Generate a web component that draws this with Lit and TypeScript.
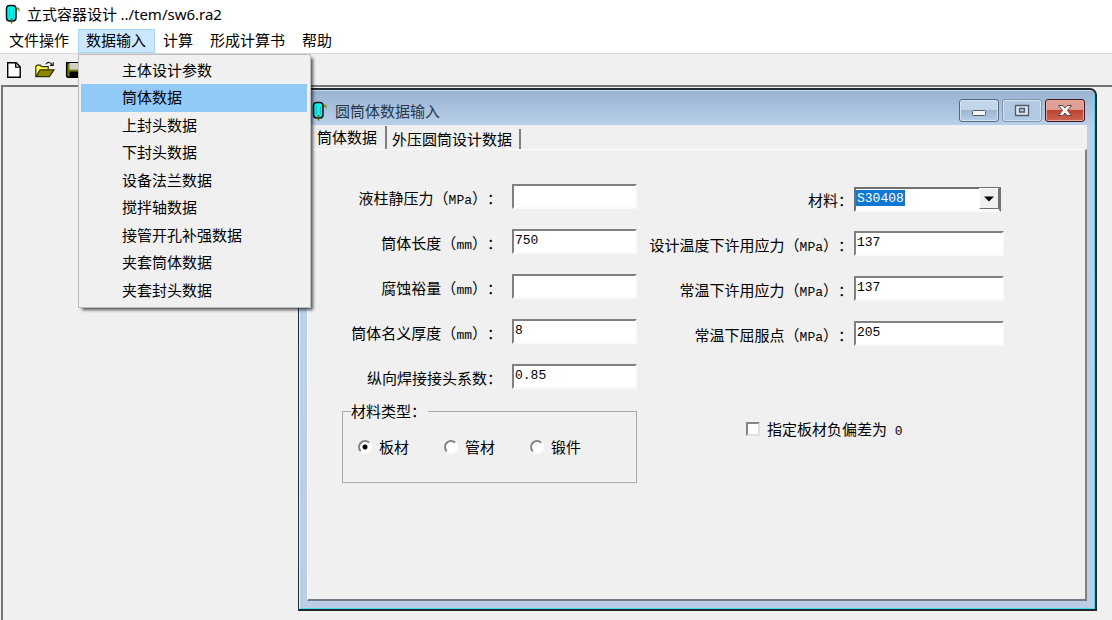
import { LitElement, html, css, svg } from "lit";
import { customElement, property, state } from "lit/decorators.js";

const vesselIcon = html`<svg width="16" height="20" viewBox="0 0 16 20" aria-hidden="true">
  <path d="M11.500 5.500h1.500l1-1.500 1 1v2.500" fill="none" stroke="#8a8a00" stroke-width="1.2" />
  <rect x="2.500" y="1.500" width="9.500" height="15.500" rx="3.200" fill="#00f4f0" stroke="#111" stroke-width="1.500" />
  <path d="M5.500 5.500v8M9.500 5.500v8" stroke="#28b9b4" stroke-width="1" />
  <path d="M7.500 14v5.500" stroke="#55550a" stroke-width="1.400" />
</svg>`;

const toolIcons = [
  {
    label: "新建",
    art: svg`<path d="M2.700 2.700h8.500l4 4v10.600H2.700z" fill="#fff" stroke="#000" stroke-width="1.400"/><path d="M10.700 3v4.200h4.300" fill="none" stroke="#000" stroke-width="1.300"/>`,
  },
  {
    label: "打开",
    art: svg`<path d="M.8 16.5V6.6l1.500-1.500h3l1.400 1.600h6.500v3" fill="#ffff55" stroke="#333300" stroke-width="1.200"/><path d="M1 16.700 5 9.800h14l-4.600 6.900z" fill="#8b8700" stroke="#333300" stroke-width="1.300"/><path d="M11 4.200c1.500-2.400 4.500-2.400 6 .6m1.200-2.600v3.200h-3.300" fill="none" stroke="#111" stroke-width="1.200"/>`,
  },
  {
    label: "保存",
    art: svg`<path d="M1.700 2.700h15v14.600h-14l-1-1z" fill="#7e7e00" stroke="#000" stroke-width="1.500"/><path d="M4.500 3h9.500v6.500H4.500z" fill="#d0d0c8"/><path d="M4.500 11.500H14V17H4.500z" fill="#000"/>`,
  },
];

interface Field {
  id: string;
  text: string;
  unit?: string;
  value: string;
}

const leftFields: Field[] = [
  { id: "pressure", text: "液柱静压力", unit: "MPa", value: "" },
  { id: "length", text: "筒体长度", unit: "mm", value: "750" },
  { id: "corrosion", text: "腐蚀裕量", unit: "mm", value: "" },
  { id: "thickness", text: "筒体名义厚度", unit: "mm", value: "8" },
  { id: "joint", text: "纵向焊接接头系数", value: "0.85" },
];

const rightFields: Field[] = [
  { id: "stress-design", text: "设计温度下许用应力", unit: "MPa", value: "137" },
  { id: "stress-normal", text: "常温下许用应力", unit: "MPa", value: "137" },
  { id: "yield", text: "常温下屈服点", unit: "MPa", value: "205" },
];

const labelText = (f: { text: string; unit?: string }) =>
  f.unit ? html`${f.text}（<span class="latin">${f.unit}</span>）：` : html`${f.text}：`;

@customElement("shell-data-form")
export class ShellDataForm extends LitElement {
  @state() private kind = "板材";

  static styles = css`
    :host {
      display: block;
      padding: 34px 81px 20px 34px;
      font: 15px/20px "Noto Sans CJK SC", sans-serif;
      text-spacing-trim: space-all;
      color: #000;
    }
    * { box-sizing: border-box; }
    .columns {
      display: grid;
      grid-template-columns: 295fr 357fr;
      column-gap: 10px;
    }
    .fields { display: grid; grid-auto-rows: 25px; row-gap: 20px; }
    .left .fields { grid-template-columns: 160px minmax(0, 1fr); column-gap: 10px; }
    .right .fields { grid-template-columns: 206px minmax(0, 1fr); column-gap: 1px; padding-top: 2px; }
    .name { padding-top: 4px; text-align: right; white-space: nowrap; }
    .latin { font: 13px/1 "Liberation Mono", monospace; }
    .box {
      width: 100%;
      height: 25px;
      margin: 0;
      padding: 0 1px 3px;
      border: 2px solid;
      border-color: #808080 #fafafa #fafafa #808080;
      border-radius: 0;
      outline: 0;
      background: #fff;
      color: #000;
      font: 13px/20px "Liberation Mono", monospace;
    }
    .combo { position: relative; margin-right: 3px; }
    .pick {
      appearance: none;
      color: #fff;
      border-color: #707070;
      border-bottom-color: #fafafa;
      background: linear-gradient(#0f78d4, #0f78d4) 0 1px / 49px 16px no-repeat #fff;
    }
    .pick option { color: #000; background: #fff; }
    .arrow {
      position: absolute;
      top: 2px;
      right: 2px;
      width: 20px;
      height: 21px;
      display: grid;
      place-items: center;
      pointer-events: none;
      background: #f0f0f0;
      border: 1px solid;
      border-color: #fff #707070 #707070 #fff;
    }
    .group {
      min-width: 0;
      margin: 12px 0 0;
      padding: 16px 15px 25px;
      border: 1px solid #a9a9a9;
      box-shadow: inset 0 -1px #f8f8f8;
    }
    .legend { margin-left: -7px; padding: 0 2px 0 0; line-height: 20px; }
    .choices { display: flex; gap: 35px; }
    .choice { display: flex; align-items: center; gap: 7px; white-space: nowrap; }
    .radio {
      appearance: none;
      width: 14px;
      height: 14px;
      margin: 0;
      border: 2px solid;
      border-color: #858585 #fff #fff #858585;
      border-radius: 50%;
      background: #fff;
    }
    .radio:checked { background: radial-gradient(circle, #000 2px, #fff 3px); }
    .deviation { margin: 73px 0 0 99px; }
    .tick {
      appearance: none;
      width: 14px;
      height: 14px;
      margin: 0;
      border: 2px solid;
      border-color: #858585 #e0e0e0 #e0e0e0 #858585;
      background: #fff;
    }
    .tick:checked { background: linear-gradient(#000, #000) center / 6px 6px no-repeat #fff; }
  `;

  private row(f: Field) {
    return html`<label class="name" for=${f.id}>${labelText(f)}</label>
      <input class="box" id=${f.id} type="text" .value=${f.value} />`;
  }

  render() {
    return html`<form class="columns">
      <div class="left">
        <div class="fields">${leftFields.map((f) => this.row(f))}</div>
        <fieldset class="group">
          <legend class="legend">材料类型：</legend>
          <div class="choices">
            ${["板材", "管材", "锻件"].map(
              (k) => html`<label class="choice"
                ><input class="radio" type="radio" name="kind" .checked=${this.kind === k}
                  @change=${() => (this.kind = k)} />${k}</label>`
            )}
          </div>
        </fieldset>
      </div>
      <div class="right">
        <div class="fields">
          <label class="name" for="material">材料：</label>
          <div class="combo">
            <select class="box pick" id="material"><option>S30408</option></select>
            <span class="arrow"><svg width="10" height="6" viewBox="0 0 10 6"><path d="M0 .5h10L5 5.500z" /></svg></span>
          </div>
          ${rightFields.map((f) => this.row(f))}
        </div>
        <label class="choice deviation"
          ><input class="tick" type="checkbox" /><span>指定板材负偏差为<span class="latin"> 0</span></span></label>
      </div>
    </form>`;
  }
}

@customElement("child-window")
export class ChildWindow extends LitElement {
  @property() caption = "";

  static styles = css`
    :host {
      display: flex;
      flex-direction: column;
      box-sizing: border-box;
      padding: 0 8px 8px 7px;
      border: 2px solid #20292f;
      border-left-width: 1px;
      border-bottom-width: 2px;
      border-radius: 6px 7px 0 0;
      background: linear-gradient(#98b2d0, #bad1ec 37px, #bad1ec 140px, #bccde8);
      box-shadow: inset 1px 0 #eaf4fc, inset -1px -1px #4fd9ec, inset 0 1px #c8dcf0;
      font: 15px/20px "Noto Sans CJK SC", sans-serif;
    }
    * { box-sizing: border-box; }
    .bar { display: flex; align-items: center; height: 35px; padding: 6px 2px 0 5px; }
    .caption { flex: 1; margin: 0 0 0 8px; font: inherit; color: #28384a; }
    .controls { display: flex; gap: 3px; align-self: flex-start; padding-top: 3px; }
    .control {
      display: grid;
      place-items: center;
      width: 40px;
      height: 23px;
      padding: 0;
      border: 1px solid #56687d;
      border-radius: 3px;
      background: linear-gradient(#c3d5e9 45%, #9db7d3 50%, #b5cce5);
      box-shadow: inset 0 0 0 1px #d5e3f2;
    }
    .dim { border-color: #8295ad; background: #b2c9e3; }
    .close {
      border-color: #47171c;
      background: linear-gradient(#dfa095 45%, #bd4431 50%, #cb6650);
      box-shadow: inset 0 0 0 1px #e4aaa0;
    }
    .tabs { display: flex; height: 24px; background: #f0f0f0; }
    .tab {
      border: 0;
      border-right: 2px solid #808080;
      background: #f0f0f0;
      color: #000;
      font: inherit;
      white-space: nowrap;
    }
    .tab.chosen { padding: 0 8px 2px 10px; margin-top: 1px; border-left: 1px solid #fff; }
    .tab.other { height: 20px; margin-top: 4px; padding: 0 7px 0 5px; }
    .page {
      flex: 1;
      margin-left: 1px;
      background: #f0f0f0;
      border: 2px solid;
      border-width: 1px 2px 2px 1px;
      border-color: #fff #828282 #737b87 #fff;
    }
  `;

  render() {
    return html`
      <header class="bar">
        ${vesselIcon}
        <h2 class="caption">${this.caption}</h2>
        <div class="controls">
          <button class="control" aria-label="最小化">
            <svg width="16" height="16" viewBox="0 0 16 16"><rect x="1.500" y="7.500" width="13" height="5" rx="1" fill="#f4f4f4" stroke="#525c68" /></svg>
          </button>
          <button class="control dim" aria-label="最大化">
            <svg width="16" height="14" viewBox="0 0 16 14"><path d="M1.500 1.500h13v10h-13zM5.500 4.500h5v3.500h-5z" fill="#dfe7f0" fill-rule="evenodd" stroke="#4f5c6e" stroke-width="1.300" /></svg>
          </button>
          <button class="control close" aria-label="关闭">
            <svg width="16" height="14" viewBox="0 0 16 14"><path d="M1.500 1.500h4.500l2 2.500 2-2.500h4.500l-4 5 4 5H10L8 9l-2 2.500H1.500l4-5z" fill="#f6f2f2" stroke="#60474e" /></svg>
          </button>
        </div>
      </header>
      <nav class="tabs">
        <button class="tab chosen">筒体数据</button>
        <button class="tab other">外压圆筒设计数据</button>
      </nav>
      <section class="page"><slot></slot></section>
    `;
  }
}

@customElement("app-root")
export class AppRoot extends LitElement {
  @state() private open = "数据输入";

  private menus = ["文件操作", "数据输入", "计算", "形成计算书", "帮助"];
  private entries = [
    "主体设计参数",
    "筒体数据",
    "上封头数据",
    "下封头数据",
    "设备法兰数据",
    "搅拌轴数据",
    "接管开孔补强数据",
    "夹套筒体数据",
    "夹套封头数据",
  ];

  static styles = css`
    :host {
      display: flex;
      flex-direction: column;
      min-height: 100vh;
      background: #f0f0f0;
      font: 15px/20px "Noto Sans CJK SC", sans-serif;
      color: #000;
    }
    * { box-sizing: border-box; }
    .title { display: flex; align-items: center; gap: 7px; height: 29px; padding: 0 4px 2px; background: #fff; }
    .name { margin: 0; font: 15px/20px "Noto Sans CJK SC", sans-serif; }
    .path { font-family: "Noto Sans", sans-serif; }
    .menus { display: flex; height: 25px; padding-left: 1px; background: #fff; border-bottom: 1px solid #dadada; }
    .menu { position: relative; }
    .head {
      height: 24px;
      padding: 0 9px 2px 8px;
      border: 0;
      background: none;
      color: #000;
      font: inherit;
    }
    .head.open { background: #cce8ff; box-shadow: inset 0 0 0 1px #a5d5fb; }
    .list {
      position: absolute;
      z-index: 2;
      top: 25px;
      left: 0;
      width: 233px;
      margin: 0;
      padding: 2px 3px 3px 2px;
      list-style: none;
      background: #f0f0f0;
      border: 1px solid #bcbcbc;
      box-shadow: 3px 3px 3px -1px rgba(0, 0, 0, 0.65);
    }
    .entry {
      display: block;
      width: 100%;
      height: 27px;
      padding: 0 0 2px 41px;
      border: 0;
      background: none;
      color: #000;
      font: inherit;
      text-align: left;
    }
    .slot:nth-child(even) .entry { height: 28px; }
    .entry.current { background: #91c9f7; }
    .tools { display: flex; gap: 8px; height: 31px; padding: 5px 4px; }
    .tool { width: 22px; height: 22px; padding: 1px; border: 0; background: none; line-height: 0; }
    .desk {
      flex: 1;
      display: flex;
      margin-left: 1px;
      padding: 1px 15px 9px 295px;
      border-top: 2px solid #747474;
      border-left: 2px solid #747474;
    }
    .child { flex: 1; min-width: 0; }
  `;

  render() {
    return html`
      <header class="title">
        ${vesselIcon}
        <h1 class="name">立式容器设计 <span class="path">../tem/sw6.ra2</span></h1>
      </header>
      <nav class="menus">
        ${this.menus.map(
          (m) => html`<div class="menu">
            <button class="head ${this.open === m ? "open" : ""}"
              @click=${() => (this.open = this.open === m ? "" : m)}>${m}</button>
            ${m === "数据输入" && this.open === m
              ? html`<ul class="list">
                  ${this.entries.map(
                    (e) => html`<li class="slot"><button class="entry ${e === "筒体数据" ? "current" : ""}">${e}</button></li>`
                  )}
                </ul>`
              : ""}
          </div>`
        )}
      </nav>
      <div class="tools">
        ${toolIcons.map(
          (t) => html`<button class="tool" aria-label=${t.label}><svg width="20" height="20" viewBox="0 0 20 20">${t.art}</svg></button>`
        )}
      </div>
      <main class="desk">
        <child-window class="child" caption="圆筒体数据输入"><shell-data-form></shell-data-form></child-window>
      </main>
    `;
  }
}
